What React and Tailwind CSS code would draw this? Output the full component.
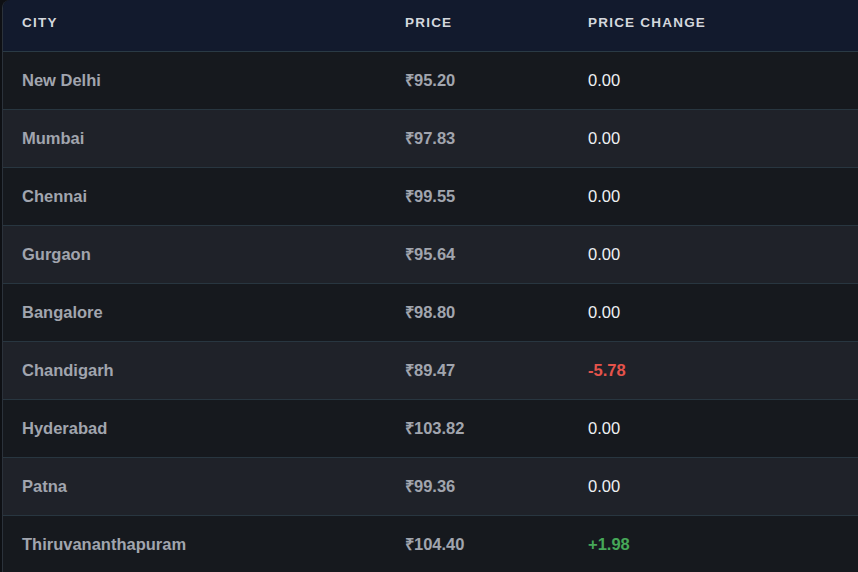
import React from 'react';

const rows = [
  { city: 'New Delhi', price: '₹95.20', change: '0.00' },
  { city: 'Mumbai', price: '₹97.83', change: '0.00' },
  { city: 'Chennai', price: '₹99.55', change: '0.00' },
  { city: 'Gurgaon', price: '₹95.64', change: '0.00' },
  { city: 'Bangalore', price: '₹98.80', change: '0.00' },
  { city: 'Chandigarh', price: '₹89.47', change: '-5.78' },
  { city: 'Hyderabad', price: '₹103.82', change: '0.00' },
  { city: 'Patna', price: '₹99.36', change: '0.00' },
  { city: 'Thiruvananthapuram', price: '₹104.40', change: '+1.98' },
];

function changeColor(change) {
  if (change.startsWith('-')) return 'text-[#e5534b]';
  if (change.startsWith('+')) return 'text-[#46a758]';
  return 'text-[#eef0f3] font-normal';
}

export default function App() {
  return (
    <div
      className="h-[572px] w-[858px] overflow-hidden bg-[#0e1014] pl-[2px]"
      style={{ fontFamily: '"Liberation Sans", Arial, sans-serif' }}
    >
      <div className="w-[900px] overflow-hidden rounded-tl-lg border-l border-[#2b323b]">
        <div className="grid h-[52px] grid-cols-[383px_183px_1fr] items-center border-b border-[#2a3a45] bg-[#121a2d] pb-[5px] text-[13.5px] font-bold uppercase tracking-[0.09em] text-[#d4d7dd]">
          <div className="pl-[19px]">City</div>
          <div className="pl-[19px]">Price</div>
          <div className="pl-[19px]">Price Change</div>
        </div>
        {rows.map((row, i) => (
          <div
            key={row.city}
            className={`grid h-[58px] grid-cols-[383px_183px_1fr] items-center border-b border-[#283640] text-[16.5px] font-bold ${
              i % 2 === 0 ? 'bg-[#16191e]' : 'bg-[#1f2229]'
            }`}
          >
            <div className="pl-[19px] text-[#a1a5ae]">{row.city}</div>
            <div className="pl-[19px] text-[#a1a5ae]">{row.price}</div>
            <div className={`pl-[19px] ${changeColor(row.change)}`}>{row.change}</div>
          </div>
        ))}
      </div>
    </div>
  );
}
